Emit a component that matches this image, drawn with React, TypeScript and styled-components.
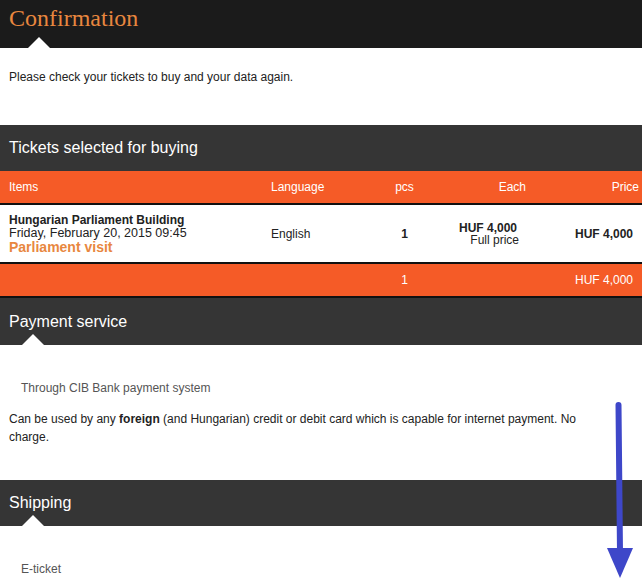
import React from 'react'
import styled, { createGlobalStyle } from 'styled-components'

const Global = createGlobalStyle`
  html, body { margin: 0; padding: 0; background: #fff; }
  body { font-family: "Liberation Sans", Arial, sans-serif; font-size: 12px; color: #222; }
`

const Page = styled.div`
  position: relative;
  width: 642px;
  height: 585px;
  overflow: hidden;
  background: #fff;
`

const Notch = styled.span<{ $left: number }>`
  position: absolute;
  bottom: 0;
  left: ${p => p.$left}px;
  width: 0;
  height: 0;
  border-left: 11px solid transparent;
  border-right: 11px solid transparent;
  border-bottom: 11px solid #fff;
`

const TopBar = styled.header`
  position: relative;
  height: 48px;
  background: #1b1b1b;
  display: flex;
  align-items: center;
  padding: 0 9px;
`

const Title = styled.h1`
  margin: 0 0 12px;
  font-family: "Liberation Serif", Georgia, serif;
  font-weight: normal;
  font-size: 24px;
  color: #e8873f;
`

const Intro = styled.p`
  margin: 0;
  height: 77px;
  padding: 20px 9px 0;
  box-sizing: border-box;
  line-height: 18px;
`

const Bar = styled.div<{ $h?: number }>`
  position: relative;
  height: ${p => p.$h ?? 46}px;
  background: #353535;
  color: #fff;
  font-size: 16px;
  display: flex;
  align-items: center;
  padding: 0 9px;
  box-sizing: border-box;
`

const Table = styled.div`
  display: grid;
  grid-template-columns: 262px 108px 60px 100px 112px;
`

const Row = styled.div<{ $kind: 'head' | 'item' | 'foot' }>`
  display: contents;
  & > div {
    height: ${p => (p.$kind === 'item' ? 59 : p.$kind === 'foot' ? 34 : 32)}px;
    background: ${p => (p.$kind === 'item' ? '#fff' : '#f55b27')};
    color: ${p => (p.$kind === 'item' ? '#222' : '#fff')};
    border-bottom: ${p => (p.$kind === 'head' ? 0 : 2)}px solid #111;
  }
`

const Divider = styled.div`
  grid-column: 1 / -1;
  height: 2px;
  background: #111;
`

const Cell = styled.div<{ $align?: 'left' | 'center' | 'right'; $pr?: number; $bold?: boolean }>`
  display: flex;
  flex-direction: column;
  justify-content: center;
  align-items: ${p => (p.$align === 'right' ? 'flex-end' : p.$align === 'center' ? 'center' : 'flex-start')};
  text-align: ${p => p.$align || 'left'};
  padding-left: 9px;
  padding-right: ${p => p.$pr ?? 0}px;
  box-sizing: border-box;
  font-weight: ${p => (p.$bold ? 'bold' : 'normal')};
  line-height: 12px;
`

const ItemName = styled.span`
  font-weight: bold;
  line-height: 13px;
`

const ItemDate = styled.span`
  font-size: 12.5px;
  line-height: 13px;
`

const ItemVisit = styled.span`
  font-weight: bold;
  font-size: 14px;
  color: #e8873f;
  line-height: 14px;
`

const EachPrice = styled.span`
  font-weight: bold;
  margin-right: 2px;
`

const Content = styled.div<{ $h: number; $pt: number }>`
  height: ${p => p.$h}px;
  padding: ${p => p.$pt}px 9px 0;
  box-sizing: border-box;
  line-height: 18px;
`

const Method = styled.div`
  color: #555;
  padding-left: 12px;
  margin-bottom: 13px;
`

const Note = styled.p`
  margin: 0;
  width: 600px;
`

const Arrow = styled.svg`
  position: absolute;
  left: 600px;
  top: 398px;
`

export default function App() {
  return (
    <Page>
      <Global />
      <TopBar>
        <Title>Confirmation</Title>
        <Notch $left={28} />
      </TopBar>
      <Intro>Please check your tickets to buy and your data again.</Intro>

      <Bar>Tickets selected for buying</Bar>
      <Table>
        <Row $kind="head">
          <Cell>Items</Cell>
          <Cell>Language</Cell>
          <Cell $align="center">pcs</Cell>
          <Cell $align="right" $pr={4}>Each</Cell>
          <Cell $align="right" $pr={3}>Price</Cell>
        </Row>
        <Divider />
        <Row $kind="item">
          <Cell>
            <ItemName>Hungarian Parliament Building</ItemName>
            <ItemDate>Friday, February 20, 2015 09:45</ItemDate>
            <ItemVisit>Parliament visit</ItemVisit>
          </Cell>
          <Cell>English</Cell>
          <Cell $align="center" $bold>1</Cell>
          <Cell $align="right" $pr={11}>
            <EachPrice>HUF 4,000</EachPrice>
            <span>Full price</span>
          </Cell>
          <Cell $align="right" $pr={9} $bold>HUF 4,000</Cell>
        </Row>
        <Row $kind="foot">
          <Cell />
          <Cell />
          <Cell $align="center">1</Cell>
          <Cell />
          <Cell $align="right" $pr={9}>HUF 4,000</Cell>
        </Row>
      </Table>

      <Bar $h={47}>
        Payment service
        <Notch $left={22} />
      </Bar>
      <Content $h={135} $pt={34}>
        <Method>Through CIB Bank payment system</Method>
        <Note>
          Can be used by any <b>foreign</b> (and Hungarian) credit or debit card which is capable for internet payment. No charge.
        </Note>
      </Content>

      <Bar>
        Shipping
        <Notch $left={22} />
      </Bar>
      <Content $h={59} $pt={34}>
        <Method>E-ticket</Method>
      </Content>

      <Arrow width="40" height="185" viewBox="600 398 40 185">
        <line x1="618.5" y1="405" x2="620" y2="552" stroke="#3e47c9" strokeWidth="6" strokeLinecap="round" />
        <polygon points="607,548 633,548 620,578" fill="#3e47c9" />
      </Arrow>
    </Page>
  )
}
